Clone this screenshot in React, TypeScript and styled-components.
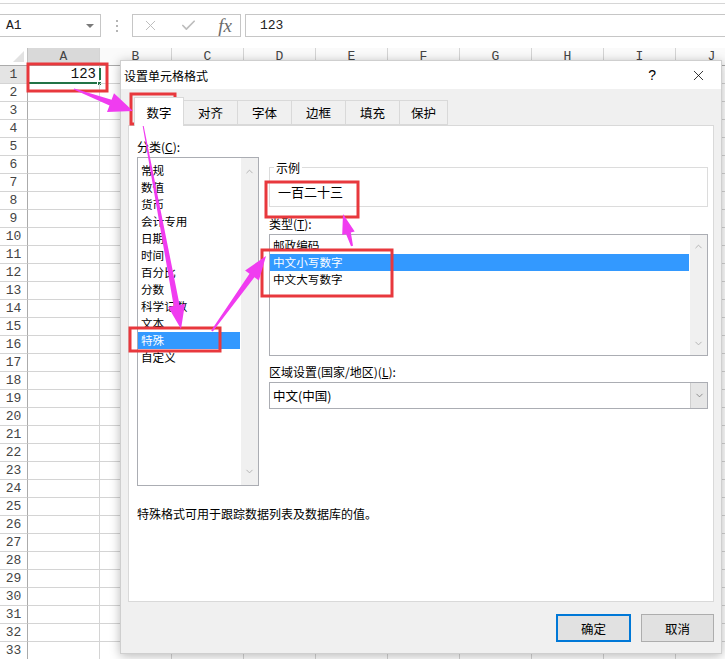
import React from 'react'
import styled, { createGlobalStyle } from 'styled-components'
import { X, Check, ChevronUp, ChevronDown } from 'lucide-react'

const GlobalStyle = createGlobalStyle`
  html, body {
    margin: 0;
    padding: 0;
    background: #fff;
  }
  body {
    width: 725px;
    height: 659px;
    overflow: hidden;
    font-family: "Noto Sans CJK SC", "Liberation Sans", sans-serif;
  }
  * {
    box-sizing: border-box;
  }
`

const Sheet = styled.div`
  position: relative;
  width: 725px;
  height: 659px;
  overflow: hidden;
  background: #fff;
`

/* ---------- excel chrome ---------- */

const TopRule = styled.div`
  height: 4px;
  border-bottom: 1px solid #d6d6d6;
`
const FormulaRow = styled.div`
  display: flex;
  height: 23px;
  margin-top: 10px;
`
const NameBox = styled.div`
  width: 101px;
  flex: none;
  border: 1px solid #c6c6c6;
  border-left: none;
  display: flex;
  align-items: center;
  justify-content: space-between;
  padding: 0 6px 0 6px;
  font-family: "Liberation Mono", monospace;
  font-size: 13px;
  color: #222;
`
const DropTriangle = styled.span`
  width: 0;
  height: 0;
  border-left: 4px solid transparent;
  border-right: 4px solid transparent;
  border-top: 4px solid #7a7a7a;
`
const Grip = styled.div`
  width: 31px;
  flex: none;
  display: flex;
  flex-direction: column;
  align-items: center;
  justify-content: center;
  gap: 3px;

  span {
    width: 2px;
    height: 2px;
    background: #b5b5b5;
  }
`
const FxBox = styled.div`
  width: 109px;
  flex: none;
  border: 1px solid #c6c6c6;
  display: flex;
  align-items: center;
  justify-content: space-between;
  padding: 0 8px 0 9px;
  color: #bdbdbd;
`
const FxLabel = styled.span`
  font-family: "Liberation Serif", serif;
  font-style: italic;
  font-size: 19px;
  color: #6b6b6b;
  line-height: 1;
`
const FormulaInput = styled.div`
  flex: 1;
  margin-left: 4px;
  border: 1px solid #c6c6c6;
  border-right: none;
  display: flex;
  align-items: center;
  padding-left: 14px;
  font-family: "Liberation Mono", monospace;
  font-size: 13px;
  color: #222;
`

const HeaderRow = styled.div`
  display: flex;
  height: 18px;
  margin-top: 11px;
`
const Corner = styled.div`
  width: 28px;
  flex: none;
  border-right: 1px solid #c0c0c0;
  border-bottom: 1px solid #ababab;
  display: flex;
  align-items: flex-end;
  justify-content: flex-end;
  padding: 0 3px 3px 0;
`
const CornerMark = styled.span`
  width: 0;
  height: 0;
  border-left: 11px solid transparent;
  border-bottom: 11px solid #e2e2e2;
`
const ColHead = styled.div<{ $active?: boolean }>`
  width: 72px;
  flex: none;
  border-right: 1px solid #d4d4d4;
  border-bottom: 1px solid #ababab;
  background: ${(p) => (p.$active ? '#d9d9d9' : '#fafafa')};
  text-align: center;
  font-family: "Liberation Mono", monospace;
  font-size: 13px;
  line-height: 17px;
  color: #444;
`
const GridRow = styled.div`
  display: flex;
  height: 18px;
`
const RowHead = styled.div<{ $active?: boolean }>`
  width: 28px;
  flex: none;
  border-right: 1px solid #ababab;
  border-bottom: 1px solid #d4d4d4;
  background: ${(p) => (p.$active ? '#e4e4e4' : '#fff')};
  text-align: center;
  font-family: "Liberation Mono", monospace;
  font-size: 13px;
  line-height: 17px;
  color: #444;
`
const Cell = styled.div<{ $selected?: boolean }>`
  position: relative;
  width: 72px;
  flex: none;
  border-right: 1px solid #d4d4d4;
  border-bottom: 1px solid ${(p) => (p.$selected ? '#217346' : '#d4d4d4')};
  border-bottom-width: ${(p) => (p.$selected ? '2px' : '1px')};
  text-align: right;
  padding-right: 3px;
  font-family: "Liberation Mono", monospace;
  font-size: 14px;
  line-height: 17px;
  color: #111;
`
const FillHandle = styled.span`
  position: absolute;
  right: -3px;
  bottom: -4px;
  width: 5px;
  height: 5px;
  background: #217346;
  border: 1px solid #fff;
`
const CursorBar = styled.span`
  position: absolute;
  right: -2px;
  top: 2px;
  width: 2px;
  height: 12px;
  background: #217346;
`

/* ---------- dialog ---------- */

const Dialog = styled.div`
  position: absolute;
  left: 120px;
  top: 60px;
  width: 602px;
  height: 594px;
  background: #f0f0f0;
  border: 1px solid #cfcfcf;
  box-shadow: 0 2px 10px rgba(0, 0, 0, 0.28);
  display: flex;
  flex-direction: column;
  font-size: 12px;
  color: #000;
`
const TitleBar = styled.div`
  height: 28px;
  background: #fff;
  display: flex;
  align-items: center;
  padding-left: 3px;
`
const Title = styled.span`
  flex: 1;
  font-size: 12px;
`
const HelpMark = styled.span`
  font-family: "Liberation Sans", sans-serif;
  font-size: 14px;
  margin-right: 34px;
`
const CloseBtn = styled.span`
  display: flex;
  margin-right: 14px;
`
const DialogBody = styled.div`
  flex: 1;
  padding: 0 7px;
  display: flex;
  flex-direction: column;
`
const TabBar = styled.div`
  display: flex;
  align-items: flex-end;
  height: 29px;
  margin-top: 8px;
  margin-bottom: -1px;
  padding-left: 6px;
  position: relative;
  z-index: 1;
`
const Tab = styled.div<{ $active?: boolean; $w: number }>`
  width: ${(p) => p.$w}px;
  height: ${(p) => (p.$active ? 29 : 25)}px;
  margin-bottom: ${(p) => (p.$active ? 0 : 1)}px;
  border: 1px solid #d9d9d9;
  border-bottom: ${(p) => (p.$active ? 'none' : '1px solid #d9d9d9')};
  border-left: ${(p) => (p.$active ? '1px solid #d9d9d9' : 'none')};
  background: ${(p) => (p.$active ? '#fff' : '#f0f0f0')};
  display: flex;
  align-items: center;
  justify-content: center;
  font-size: 12.5px;
`
const Panel = styled.div`
  height: 477px;
  background: #fff;
  border: 1px solid #d9d9d9;
  padding: 12px 0 0 8px;
  display: flex;
  flex-direction: column;
`
const Columns = styled.div`
  display: flex;
  gap: 10px;
`
const LeftCol = styled.div`
  width: 122px;
  display: flex;
  flex-direction: column;
`
const RightCol = styled.div`
  width: 439px;
  display: flex;
  flex-direction: column;
  padding-top: 21px;
`
const Label = styled.div<{ $gap?: number }>`
  height: 17px;
  line-height: 17px;
  margin-top: ${(p) => p.$gap ?? 0}px;
  margin-bottom: 2px;
  font-size: 12px;

  u {
    text-decoration: underline;
  }
`
const ListBox = styled.div<{ $h: number }>`
  height: ${(p) => p.$h}px;
  border: 1px solid #abadb3;
  display: flex;
  overflow: hidden;
`
const Items = styled.div<{ $top: number }>`
  flex: 1;
  padding: ${(p) => p.$top}px 0 0 0;
`
const Item = styled.div<{ $selected?: boolean }>`
  height: 17px;
  line-height: 17px;
  padding-left: 3px;
  font-size: 11.6px;
  white-space: nowrap;
  background: ${(p) => (p.$selected ? '#3399ff' : 'transparent')};
  color: ${(p) => (p.$selected ? '#fff' : '#000')};
  margin-right: 1px;
`
const ScrollBar = styled.div<{ $pad: number }>`
  width: 17px;
  background: #f0f0f0;
  display: flex;
  flex-direction: column;
  align-items: center;
  justify-content: space-between;
  padding: ${(p) => p.$pad}px 0;
  color: #b0b0b0;
`
const Sample = styled.fieldset`
  margin: 0;
  padding: 7px 8px 6px 4px;
  border: 1px solid #dcdcdc;

  legend {
    padding: 0 2px;
    font-size: 12px;
    line-height: 17px;
  }
`
const SampleText = styled.div`
  padding-left: 4px;
  font-size: 13px;
  line-height: 17px;
`
const Select = styled.div`
  height: 27px;
  border: 1px solid #abadb3;
  display: flex;
  align-items: center;
`
const SelectValue = styled.span`
  flex: 1;
  padding-left: 3px;
  font-size: 12.5px;
`
const SelectButton = styled.span`
  width: 17px;
  height: 100%;
  background: #e6e6e6;
  border-left: 1px solid #cfcfcf;
  display: flex;
  align-items: center;
  justify-content: center;
  color: #707070;
`
const Description = styled.div`
  margin-top: 19px;
  font-size: 12px;
  line-height: 17px;
`
const Footer = styled.div`
  display: flex;
  justify-content: flex-end;
  gap: 10px;
  padding: 12px 0 0;
`
const Button = styled.button<{ $primary?: boolean }>`
  width: ${(p) => (p.$primary ? 75 : 73)}px;
  height: 28px;
  background: #e1e1e1;
  border: ${(p) => (p.$primary ? '2px solid #0078d7' : '1px solid #adadad')};
  font-family: "Noto Sans CJK SC", sans-serif;
  font-size: 12.5px;
  color: #000;
  padding: 0;
`

/* ---------- annotations ---------- */

const Overlay = styled.svg`
  position: absolute;
  left: 0;
  top: 0;
  pointer-events: none;
`

type Pt = [number, number]

function arrowPoints(s: Pt, t: Pt, w1: number, w2: number, hl: number, hw: number) {
  const dx = t[0] - s[0]
  const dy = t[1] - s[1]
  const len = Math.hypot(dx, dy)
  const ux = dx / len
  const uy = dy / len
  const nx = -uy
  const ny = ux
  const bx = t[0] - ux * hl
  const by = t[1] - uy * hl
  const p = (x: number, y: number, k: number) =>
    `${(x + nx * k).toFixed(1)},${(y + ny * k).toFixed(1)}`
  return [
    p(s[0], s[1], w1 / 2),
    p(bx, by, w2 / 2),
    p(bx, by, hw / 2),
    p(t[0], t[1], 0),
    p(bx, by, -hw / 2),
    p(bx, by, -w2 / 2),
    p(s[0], s[1], -w1 / 2),
  ].join(' ')
}

const arrows: [Pt, Pt, number, number, number, number][] = [
  [[74, 89], [133, 111], 1, 6, 24, 20],
  [[143, 125], [181, 329], 1, 6, 24, 17],
  [[212, 331], [266, 256], 2, 6, 24, 17],
  [[352, 246], [343, 214], 2, 5, 20, 13],
]

const redBoxes = [
  { x: 28, y: 64, w: 79, h: 27 },
  { x: 131, y: 94, w: 44, h: 30 },
  { x: 130, y: 328, w: 90, h: 23 },
  { x: 266, y: 182, w: 92, h: 35 },
  { x: 262, y: 250, w: 130, h: 46 },
]

const columns = ['A', 'B', 'C', 'D', 'E', 'F', 'G', 'H', 'I', 'J']
const rows = Array.from({ length: 33 }, (_, i) => i + 1)

const categories = ['常规', '数值', '货币', '会计专用', '日期', '时间', '百分比', '分数', '科学记数', '文本', '特殊', '自定义']
const types = ['邮政编码', '中文小写数字', '中文大写数字']
const tabs: [string, number][] = [
  ['数字', 50],
  ['对齐', 54],
  ['字体', 54],
  ['边框', 54],
  ['填充', 54],
  ['保护', 48],
]

export default function App() {
  return (
    <Sheet>
      <GlobalStyle />
      <TopRule />
      <FormulaRow>
        <NameBox>
          A1
          <DropTriangle />
        </NameBox>
        <Grip>
          <span />
          <span />
          <span />
        </Grip>
        <FxBox>
          <X size={17} strokeWidth={1.4} />
          <Check size={17} strokeWidth={2.4} />
          <FxLabel>fx</FxLabel>
        </FxBox>
        <FormulaInput>123</FormulaInput>
      </FormulaRow>

      <HeaderRow>
        <Corner>
          <CornerMark />
        </Corner>
        {columns.map((c) => (
          <ColHead key={c} $active={c === 'A'}>
            {c}
          </ColHead>
        ))}
      </HeaderRow>
      {rows.map((r) => (
        <GridRow key={r}>
          <RowHead $active={r === 1}>{r}</RowHead>
          {columns.map((c) =>
            r === 1 && c === 'A' ? (
              <Cell key={c} $selected>
                123
                <CursorBar />
                <FillHandle />
              </Cell>
            ) : (
              <Cell key={c} />
            )
          )}
        </GridRow>
      ))}

      <Dialog>
        <TitleBar>
          <Title>设置单元格格式</Title>
          <HelpMark>?</HelpMark>
          <CloseBtn>
            <X size={17} strokeWidth={1.1} />
          </CloseBtn>
        </TitleBar>
        <DialogBody>
          <TabBar>
            {tabs.map(([t, w], i) => (
              <Tab key={t} $w={w} $active={i === 0}>
                {t}
              </Tab>
            ))}
          </TabBar>
          <Panel>
            <Columns>
              <LeftCol>
                <Label>
                  分类(<u>C</u>):
                </Label>
                <ListBox $h={329}>
                  <Items $top={4}>
                    {categories.map((c) => (
                      <Item key={c} $selected={c === '特殊'}>
                        {c}
                      </Item>
                    ))}
                  </Items>
                  <ScrollBar $pad={8}>
                    <ChevronUp size={11} strokeWidth={2} />
                    <ChevronDown size={11} strokeWidth={2} />
                  </ScrollBar>
                </ListBox>
              </LeftCol>
              <RightCol>
                <Sample>
                  <legend>示例</legend>
                  <SampleText>一百二十三</SampleText>
                </Sample>
                <Label $gap={8}>
                  类型(<u>T</u>):
                </Label>
                <ListBox $h={122}>
                  <Items $top={2}>
                    {types.map((t) => (
                      <Item key={t} $selected={t === '中文小写数字'}>
                        {t}
                      </Item>
                    ))}
                  </Items>
                  <ScrollBar $pad={6}>
                    <ChevronUp size={11} strokeWidth={2} />
                    <ChevronDown size={11} strokeWidth={2} />
                  </ScrollBar>
                </ListBox>
                <Label $gap={7}>
                  区域设置(国家/地区)(<u>L</u>):
                </Label>
                <Select>
                  <SelectValue>中文(中国)</SelectValue>
                  <SelectButton>
                    <ChevronDown size={11} strokeWidth={1.6} />
                  </SelectButton>
                </Select>
              </RightCol>
            </Columns>
            <Description>特殊格式可用于跟踪数据列表及数据库的值。</Description>
          </Panel>
          <Footer>
            <Button $primary>确定</Button>
            <Button>取消</Button>
          </Footer>
        </DialogBody>
      </Dialog>

      <Overlay width={725} height={659}>
        {redBoxes.map((b, i) => (
          <rect key={i} x={b.x} y={b.y} width={b.w} height={b.h} fill="none" stroke="#e8383d" strokeWidth={3} />
        ))}
        {arrows.map(([s, t, w1, w2, hl, hw], i) => (
          <polygon key={i} points={arrowPoints(s, t, w1, w2, hl, hw)} fill="#f03cf0" />
        ))}
      </Overlay>
    </Sheet>
  )
}
